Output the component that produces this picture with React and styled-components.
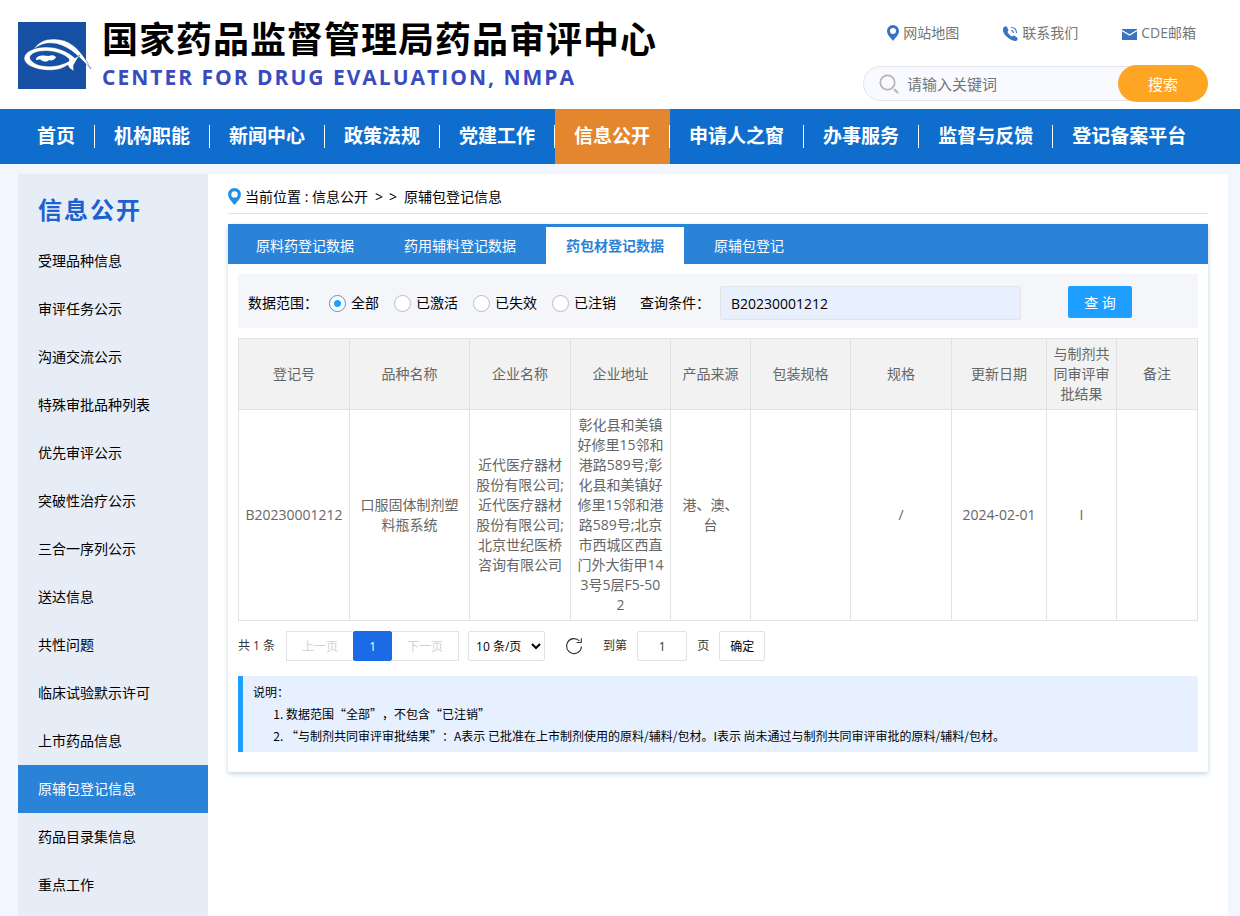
import React, { useState } from "react";
import styled, { createGlobalStyle } from "styled-components";

const GlobalStyle = createGlobalStyle`
  * {
    box-sizing: border-box;
  }
  body {
    margin: 0;
    background: #f2f7ff;
    color: #000;
    font: 14px/20px "Open Sans", "Noto Sans CJK SC", sans-serif;
  }
  a {
    color: inherit;
    text-decoration: none;
  }
  button, input, select {
    margin: 0;
    font-family: inherit;
  }
  button {
    cursor: pointer;
  }
`;

const Page = styled.div`
  display: flex;
  flex-direction: column;
  min-height: 100vh;
`;

// ---------- header ----------

const Header = styled.header`
  display: flex;
  justify-content: space-between;
  height: 109px;
  padding: 0 32px 0 18px;
  background: #fff;
`;

const Brand = styled.a`
  display: flex;
  align-items: flex-start;
  gap: 10px;
  padding-top: 22px;
`;

const BrandText = styled.div`
  display: flex;
  flex-direction: column;
  white-space: nowrap;
`;

const BrandName = styled.span`
  font-size: 36px;
  font-weight: 700;
  line-height: 36px;
  letter-spacing: 1px;
`;

const BrandEnglish = styled.span`
  margin-top: 4px;
  color: #3a4bbf;
  font-size: 21px;
  font-weight: 700;
  line-height: 30px;
  letter-spacing: 2px;
`;

const HeaderSide = styled.div`
  display: flex;
  flex-direction: column;
  gap: 22px;
  width: 345px;
  padding-top: 23px;
`;

const QuickLinks = styled.nav`
  display: flex;
  justify-content: flex-end;
  gap: 44px;
  padding-right: 12px;
  color: #757575;
`;

const QuickLink = styled.a`
  display: flex;
  align-items: center;
  gap: 4px;
`;

const Search = styled.form`
  display: flex;
  align-items: center;
  height: 37px;
`;

const SearchBox = styled.label`
  display: flex;
  flex: 1;
  align-items: center;
  gap: 8px;
  height: 35px;
  margin-right: -30px;
  padding-left: 15px;
  border: 1px solid #e2e4e9;
  border-radius: 18px;
  background: #f9faff;
`;

const SearchInput = styled.input`
  flex: 1;
  min-width: 0;
  padding: 0;
  border: 0;
  outline: 0;
  background: none;
  font-size: 15px;

  &::placeholder {
    color: #757575;
  }
`;

const SearchButton = styled.button`
  width: 90px;
  height: 37px;
  border: 0;
  border-radius: 19px;
  background: #ffa524;
  color: #fff;
  font-size: 15px;
  z-index: 1;
`;

// ---------- main nav ----------

const NavBar = styled.nav`
  display: flex;
  height: 55px;
  padding: 0 18px;
  background: #0f6ecd;
`;

const NavLink = styled.a`
  display: flex;
  align-items: center;
  padding-left: 19px;
  background: ${(props) => (props.$active ? "#e4862d" : "none")};
  color: #fff;
  font-size: 19px;
  font-weight: 700;
  line-height: 23px;
  white-space: nowrap;

  span {
    padding-right: 19px;
    border-right: 1px solid #fff;
  }
  &:last-child span {
    border: 0;
  }
`;

// ---------- body ----------

const Body = styled.div`
  display: flex;
  flex: 1;
  margin: 10px 12px 0 18px;
  background: #fff;
`;

const Sidebar = styled.aside`
  flex: 0 0 190px;
  background: #e6edf6;
`;

const SidebarTitle = styled.h2`
  margin: 0;
  padding: 18px 20px 9px;
  color: #1b62d1;
  font-size: 24px;
  line-height: 36px;
  letter-spacing: 2px;
`;

const SidebarLink = styled.a`
  display: block;
  padding: 0 20px;
  background: ${(props) => (props.$active ? "#2b83d8" : "none")};
  color: ${(props) => (props.$active ? "#fff" : "#000")};
  line-height: 48px;
`;

const Main = styled.main`
  flex: 1;
  min-width: 0;
  padding: 0 20px;
`;

const Breadcrumb = styled.div`
  display: flex;
  align-items: center;
  gap: 4px;
  height: 40px;
  padding-top: 6px;
  border-bottom: 1px solid #e2e2e2;
`;

const Arrows = styled.span`
  display: grid;
  grid-template-columns: 14px 14px;
  justify-items: center;
`;

const Card = styled.section`
  margin: 10px 0 20px;
  border-radius: 2px;
  background: #fff;
  box-shadow: 0 2px 5px rgba(60, 110, 150, 0.3);
`;

const Tabs = styled.div`
  display: flex;
  gap: 10px;
  height: 40px;
  padding: 0 8px;
  background: #2b83d8;
`;

const Tab = styled.button`
  padding: 0 20px 2px;
  border: 0;
  border-top: 3px solid #2b83d8;
  background: ${(props) => (props.$active ? "#fff" : "none")};
  color: ${(props) => (props.$active ? "#2b83d8" : "#fff")};
  font-size: 14px;
  font-weight: ${(props) => (props.$active ? 700 : 400)};
`;

const CardBody = styled.div`
  padding: 10px 10px 20px;
`;

const Filter = styled.form`
  display: flex;
  align-items: flex-start;
  padding: 12px 10px 8px;
  background: #f4f6fa;
  line-height: 34px;
`;

const RadioGroup = styled.div`
  display: flex;
  gap: 15px;
  margin: 0 24px 0 11px;
`;

const RadioLabel = styled.label`
  display: flex;
  align-items: center;
  gap: 5px;
`;

const Radio = styled.input`
  width: 17px;
  height: 17px;
  border: 1px solid #bbb;
  border-radius: 50%;
  background: #fff;
  appearance: none;

  &:checked {
    border-color: #4a94ee;
    background: radial-gradient(circle, #1e9fff 3px, #fff 4px);
  }
`;

const QueryInput = styled.input`
  width: 301px;
  height: 34px;
  margin: 0 47px 0 10px;
  padding: 0 10px;
  border: 1px solid #e2e4e8;
  border-radius: 2px;
  background: #e8f0fe;
  font-size: 14px;
`;

const QueryButton = styled.button`
  width: 64px;
  height: 32px;
  border: 0;
  border-radius: 2px;
  background: #1e9fff;
  color: #fff;
  font-size: 14px;
`;

const DataTable = styled.table`
  width: 100%;
  margin: 10px 0;
  border-collapse: collapse;
  table-layout: fixed;
  color: #666;

  th, td {
    padding: 5px 6px;
    border: 1px solid #e2e2e2;
    font-weight: 400;
    text-align: center;
    word-break: break-all;
  }
  th {
    background: #f2f2f2;
  }
`;

const Pager = styled.div`
  display: flex;
  align-items: center;
  color: #333;
  font-size: 12px;
`;

const PageButtons = styled.div`
  display: flex;
  margin: 0 9px 0 11px;
`;

const PageButton = styled.button`
  width: ${(props) => (props.$current ? 39 : 67)}px;
  height: 30px;
  padding: 0;
  border: 1px solid ${(props) => (props.$current ? "#1b6ae6" : "#e2e2e2")};
  border-radius: ${(props) => (props.$current ? 2 : 0)}px;
  background: ${(props) => (props.$current ? "#1b6ae6" : "#fff")};
  color: ${(props) => (props.$current ? "#fff" : "#d2d2d2")};
  font-size: 12px;

  &:first-child {
    border-right: 0;
  }
  &:last-child {
    border-left: 0;
  }
`;

const PageSize = styled.select`
  width: 77px;
  height: 30px;
  padding: 0 3px;
  border: 1px solid #e2e2e2;
  border-radius: 2px;
  background: #fff;
  color: #000;
  font-size: 12px;
`;

const RefreshButton = styled.button`
  display: flex;
  margin: 0 20px;
  padding: 0;
  border: 0;
  background: none;
  color: #333;
`;

const JumpLabel = styled.label`
  display: flex;
  align-items: center;
`;

const JumpInput = styled.input`
  width: 50px;
  height: 30px;
  margin: 0 10px;
  border: 1px solid #e2e2e2;
  border-radius: 2px;
  color: #333;
  font-size: 12px;
  text-align: center;
`;

const JumpButton = styled.button`
  width: 46px;
  height: 30px;
  margin-left: 10px;
  padding: 0;
  border: 1px solid #e2e2e2;
  border-radius: 2px;
  background: #fff;
  font-size: 12px;
`;

// the CJK face comes first here so the quotation marks are full width
const Notes = styled.div`
  margin-top: 15px;
  padding: 5px 10px;
  border-left: 5px solid #1e9fff;
  border-radius: 0 2px 2px 0;
  background: #e6f0ff;
  font: 12px/22px "Noto Sans CJK SC", sans-serif;
  text-spacing-trim: space-all;

  ol {
    margin: 0;
    padding-left: 33px;
  }
`;

const Logo = () => (
  <svg width="74" height="67" viewBox="0 0 74 67" aria-hidden="true">
    <rect width="68" height="67" fill="#1550a5" />
    <g fill="#fff" stroke="#0c3474" strokeWidth="0.4">
      <path d="M15 28C20 20 27 17 36 17C51 17 60 26 68 38L73 47C62 36 54 26 39 22C29 20 22 22 15 28Z" />
      <path
        fillRule="evenodd"
        d="M6 36C7 29 17 25 28 25C40 25 49 29 57 36L62 33C60 36 58 38 57 41C55 43 55 45 56 49C52 47 50 45 50 43C43 48 34 49 26 48C15 47 6 42 6 36ZM12 36C13 40 20 44 28 44C38 45 46 42 51 39L51 37C47 33 38 29 28 29C18 29 12 32 12 36Z"
      />
      <path
        stroke="none"
        d="M18 38C18 33 25 33 31 34C33 33 36 33 38 35C37 38 33 39 31 38C29 40 26 40 23 38C21 37 20 38 18 38Z"
      />
    </g>
  </svg>
);

const Pin = ({ color, width, height }) => (
  <svg width={width} height={height} viewBox="0 0 12 16" aria-hidden="true">
    <path
      fill={color}
      fillRule="evenodd"
      d="M6 0A6 6 0 0 1 12 6C12 10 8 13 6 16C4 13 0 10 0 6A6 6 0 0 1 6 0ZM6 3A3 3 0 1 0 6 9A3 3 0 1 0 6 3Z"
    />
  </svg>
);

const Phone = () => (
  <svg width="15" height="15" viewBox="0 0 15 15" aria-hidden="true">
    <path
      fill="#3a72c4"
      d="M1 1C2 0 3 0 4 1L5.500 4C5.500 5 4.500 5 4.500 6C5.500 8 7 9.500 9 10.500C10 10.500 10 9.500 11 9.500L14 11.500C15 12.500 15 14 13 15C10 15 6 13 3 10C0 7 -1 3 1 1Z"
    />
    <path
      fill="none"
      stroke="#3a72c4"
      strokeWidth="1.1"
      d="M8 4.500C9.500 4.500 10.500 5.500 10.500 7M8 1.500C11.500 1.500 13.500 3.500 13.500 7"
    />
  </svg>
);

const Mail = () => (
  <svg width="15" height="15" viewBox="0 0 15 15" aria-hidden="true">
    <path fill="#3a72c4" d="M0 3H15V14H0Z" />
    <path fill="none" stroke="#fff" strokeWidth="1.2" d="M0 4.500L7.500 9L15 4.500" />
  </svg>
);

const Magnifier = () => (
  <svg width="20" height="20" viewBox="0 0 20 20" aria-hidden="true">
    <circle cx="8.500" cy="8.500" r="7.200" fill="none" stroke="#b5b5b5" strokeWidth="1.700" />
    <path stroke="#b5b5b5" strokeWidth="2" d="M15 15L19 19" />
  </svg>
);

const Refresh = () => (
  <svg width="18" height="18" viewBox="0 0 18 18" aria-hidden="true">
    <path
      fill="none"
      stroke="currentColor"
      strokeWidth="1.1"
      d="M16.500 9.500A7.500 7.500 0 1 1 14.500 4M16.300 1.200V5.500H11.700"
    />
  </svg>
);

const navItems = [
  "首页",
  "机构职能",
  "新闻中心",
  "政策法规",
  "党建工作",
  "信息公开",
  "申请人之窗",
  "办事服务",
  "监督与反馈",
  "登记备案平台",
];

const sideItems = [
  "受理品种信息",
  "审评任务公示",
  "沟通交流公示",
  "特殊审批品种列表",
  "优先审评公示",
  "突破性治疗公示",
  "三合一序列公示",
  "送达信息",
  "共性问题",
  "临床试验默示许可",
  "上市药品信息",
  "原辅包登记信息",
  "药品目录集信息",
  "重点工作",
];

const tabs = ["原料药登记数据", "药用辅料登记数据", "药包材登记数据", "原辅包登记"];

const ranges = ["全部", "已激活", "已失效", "已注销"];

// widths are shares of the table, which always fills its card
const columns = [
  { title: "登记号", width: 111 },
  { title: "品种名称", width: 120 },
  { title: "企业名称", width: 101 },
  { title: "企业地址", width: 100 },
  { title: "产品来源", width: 80 },
  { title: "包装规格", width: 100 },
  { title: "规格", width: 101 },
  { title: "更新日期", width: 95 },
  { title: "与制剂共同审评审批结果", width: 70 },
  { title: "备注", width: 81 },
];

const rows = [
  [
    "B20230001212",
    "口服固体制剂塑料瓶系统",
    "近代医疗器材股份有限公司;近代医疗器材股份有限公司;北京世纪医桥咨询有限公司",
    "彰化县和美镇好修里15邻和港路589号;彰化县和美镇好修里15邻和港路589号;北京市西城区西直门外大街甲143号5层F5-502",
    "港、澳、台",
    "",
    "/",
    "2024-02-01",
    "I",
    "",
  ],
];

function SiteHeader() {
  return (
    <Header>
      <Brand href="#">
        <Logo />
        <BrandText>
          <BrandName>国家药品监督管理局药品审评中心</BrandName>
          <BrandEnglish>CENTER FOR DRUG EVALUATION, NMPA</BrandEnglish>
        </BrandText>
      </Brand>
      <HeaderSide>
        <QuickLinks>
          <QuickLink href="#">
            <Pin color="#3a72c4" width={12} height={16} />
            网站地图
          </QuickLink>
          <QuickLink href="#">
            <Phone />
            联系我们
          </QuickLink>
          <QuickLink href="#">
            <Mail />
            CDE邮箱
          </QuickLink>
        </QuickLinks>
        <Search onSubmit={(e) => e.preventDefault()}>
          <SearchBox>
            <Magnifier />
            <SearchInput aria-label="站内搜索" placeholder="请输入关键词" />
          </SearchBox>
          <SearchButton>搜索</SearchButton>
        </Search>
      </HeaderSide>
    </Header>
  );
}

function QueryForm() {
  const [range, setRange] = useState("全部");
  const [keyword, setKeyword] = useState("B20230001212");

  return (
    <Filter onSubmit={(e) => e.preventDefault()}>
      <span>数据范围：</span>
      <RadioGroup role="radiogroup" aria-label="数据范围">
        {ranges.map((name) => (
          <RadioLabel key={name}>
            <Radio
              type="radio"
              name="range"
              checked={range === name}
              onChange={() => setRange(name)}
            />
            {name}
          </RadioLabel>
        ))}
      </RadioGroup>
      <label htmlFor="keyword">查询条件：</label>
      <QueryInput
        id="keyword"
        value={keyword}
        onChange={(e) => setKeyword(e.target.value)}
      />
      <QueryButton>查 询</QueryButton>
    </Filter>
  );
}

function Pagination() {
  return (
    <Pager>
      <span>共 1 条</span>
      <PageButtons>
        <PageButton disabled>上一页</PageButton>
        <PageButton $current>1</PageButton>
        <PageButton disabled>下一页</PageButton>
      </PageButtons>
      <PageSize aria-label="每页条数" defaultValue="10">
        <option value="10">10 条/页</option>
        <option value="20">20 条/页</option>
        <option value="50">50 条/页</option>
      </PageSize>
      <RefreshButton aria-label="刷新">
        <Refresh />
      </RefreshButton>
      <JumpLabel>
        到第
        <JumpInput defaultValue="1" />
        页
      </JumpLabel>
      <JumpButton>确定</JumpButton>
    </Pager>
  );
}

function App() {
  const [tab, setTab] = useState("药包材登记数据");

  return (
    <Page lang="zh-CN">
      <GlobalStyle />
      <SiteHeader />
      <NavBar>
        {navItems.map((name) => (
          <NavLink key={name} href="#" $active={name === "信息公开"}>
            <span>{name}</span>
          </NavLink>
        ))}
      </NavBar>
      <Body>
        <Sidebar>
          <SidebarTitle>信息公开</SidebarTitle>
          {sideItems.map((name) => (
            <SidebarLink key={name} href="#" $active={name === "原辅包登记信息"}>
              {name}
            </SidebarLink>
          ))}
        </Sidebar>
        <Main>
          <Breadcrumb>
            <Pin color="#1e90e8" width={13} height={17} />
            <span>当前位置 : 信息公开</span>
            <Arrows>
              <span>&gt;</span>
              <span>&gt;</span>
            </Arrows>
            <span>原辅包登记信息</span>
          </Breadcrumb>
          <Card>
            <Tabs>
              {tabs.map((name) => (
                <Tab key={name} $active={tab === name} onClick={() => setTab(name)}>
                  {name}
                </Tab>
              ))}
            </Tabs>
            <CardBody>
              <QueryForm />
              <DataTable>
                <colgroup>
                  {columns.map((col) => (
                    <col key={col.title} width={col.width} />
                  ))}
                </colgroup>
                <thead>
                  <tr>
                    {columns.map((col) => (
                      <th key={col.title}>{col.title}</th>
                    ))}
                  </tr>
                </thead>
                <tbody>
                  {rows.map((row) => (
                    <tr key={row[0]}>
                      {row.map((cell, i) => (
                        <td key={i}>{cell}</td>
                      ))}
                    </tr>
                  ))}
                </tbody>
              </DataTable>
              <Pagination />
              <Notes>
                说明：
                <ol>
                  <li>数据范围“全部”，不包含“已注销”</li>
                  <li>
                    “与制剂共同审评审批结果”：A表示 已批准在上市制剂使用的原料/辅料/包材。I表示
                    尚未通过与制剂共同审评审批的原料/辅料/包材。
                  </li>
                </ol>
              </Notes>
            </CardBody>
          </Card>
        </Main>
      </Body>
    </Page>
  );
}

export default App;
